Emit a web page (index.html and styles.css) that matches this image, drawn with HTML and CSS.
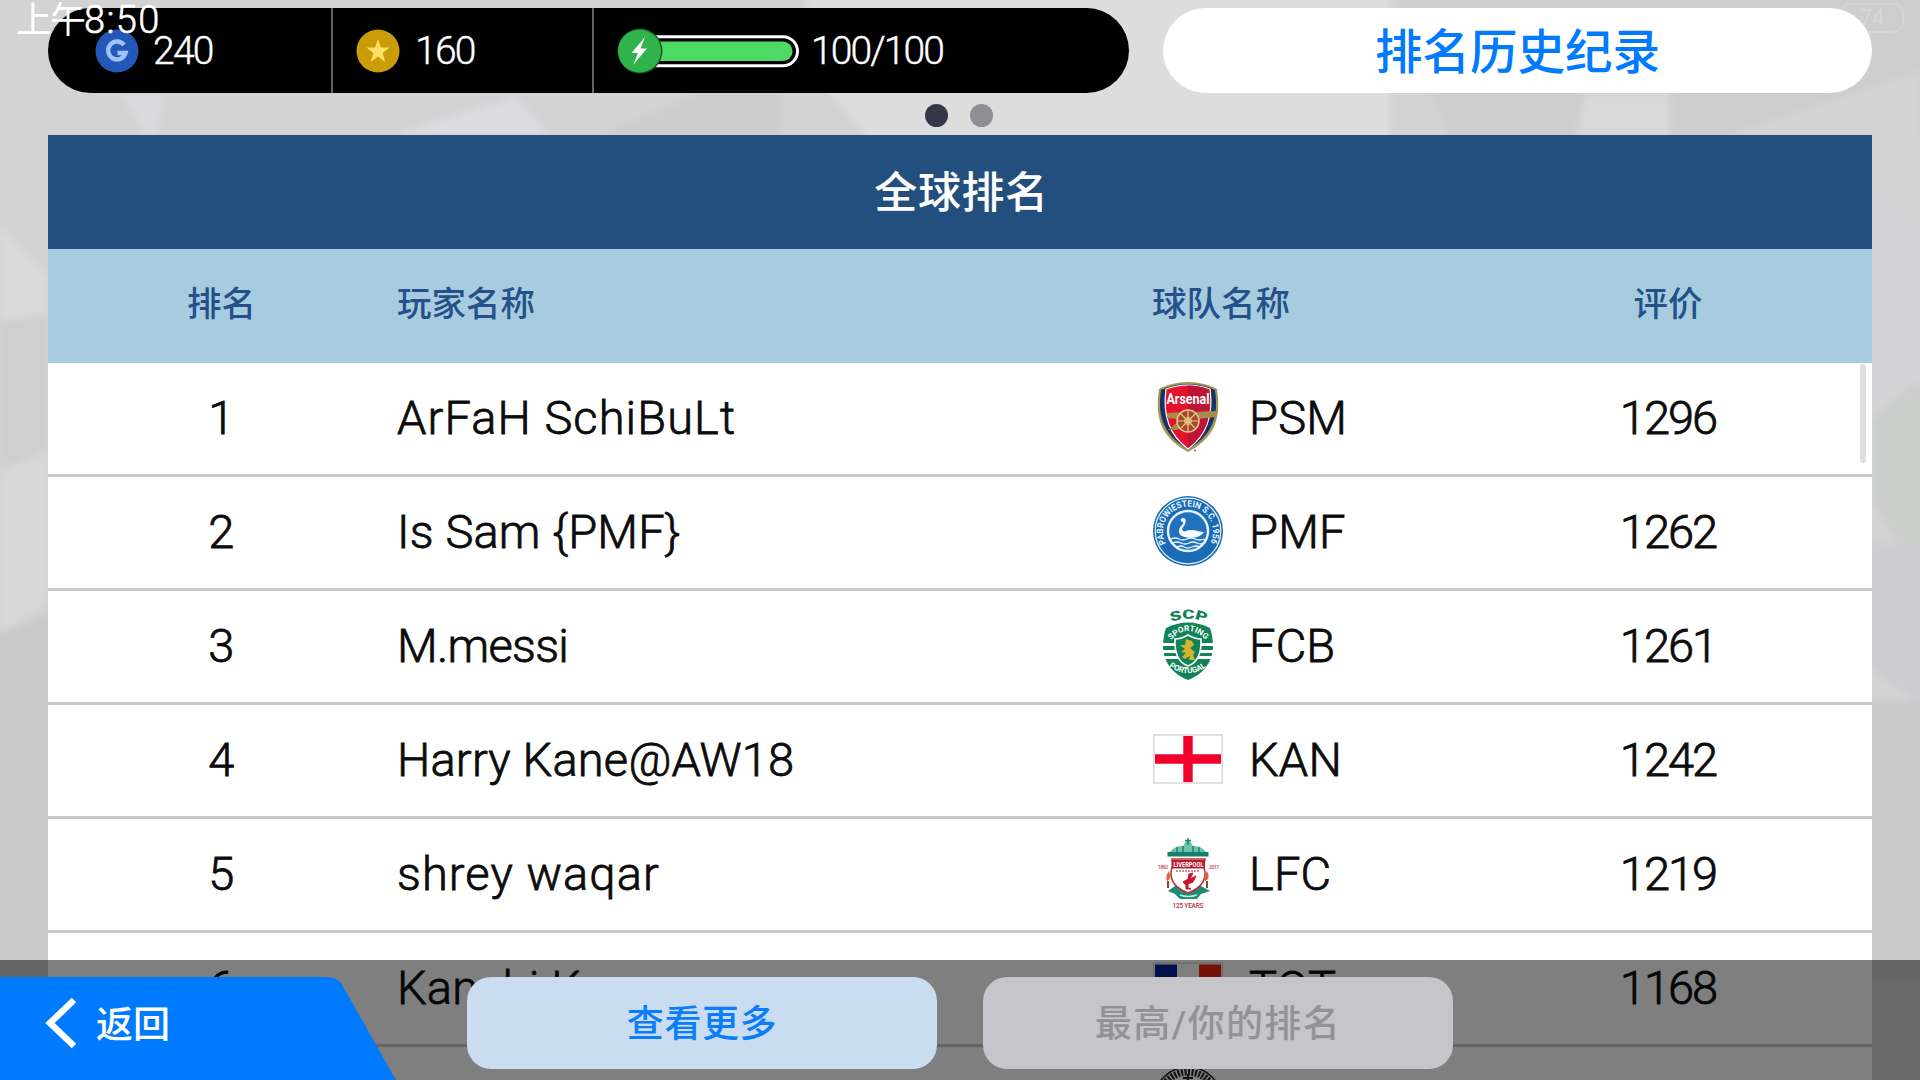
FILE: index.html
```
<!DOCTYPE html>
<html lang="zh-CN">
<head>
    <meta charset="UTF-8">
    <meta name="viewport" content="width=device-width, initial-scale=1.0">
    <title>全球排名</title>
    <link rel="stylesheet" href="styles.css">
</head>
<body>
    <!-- 背景 -->
    <svg class="backdrop" viewBox="0 0 1920 1080" preserveAspectRatio="none">
        <rect x="-20" y="-20" width="1960" height="1120" fill="#d3d3d4"/>
        <path d="M0 225L48 275V320L0 335Z" fill="#dadadb"/>
        <path d="M0 320L48 315V460L0 470Z" fill="#cfcfcf"/>
        <path d="M0 470L48 450V600L0 640Z" fill="#d7d7d7"/>
        <path d="M-20 640L60 610V790L-20 850Z" fill="#c9c9ca"/>
        <path d="M-20 850L60 790V1100H-20Z" fill="#cbcbcc"/>
        <path d="M120 93H165L158 135H145Z" fill="#dadadc"/>
        <path d="M390 135L515 97L550 135Z" fill="#dcdce0"/>
        <path d="M600 135L700 93H780V135Z" fill="#cdcdce"/>
        <path d="M800 -20H1390V140H870L830 93Z" fill="#dddddd"/>
        <path d="M1390 -20H1940V140H1450Z" fill="#cecece"/>
        <path d="M1585 93H1670V140H1575Z" fill="#d8d8d8"/>
        <path d="M1730 135L1920 70V200L1872 170Z" fill="#d3d3d3"/>
        <path d="M1872 350L1940 400V620L1872 500Z" fill="#cccecc"/>
        <path d="M1872 180L1940 240V360L1872 420Z" fill="#d3d2d5"/>
        <path d="M1860 540L1940 550V720L1860 660Z" fill="#cdccd0"/>
        <path d="M1860 700H1940V980H1860Z" fill="#cbcbcb"/>
    </svg>

    <!-- 系统状态栏 -->
    <div class="clock">上午<span>8:50</span></div>
    <div class="battery">74</div>

    <div class="screen">
        <header class="top-bar">
            <div class="wallet">
                <div class="wallet-item coins">
                    <svg class="wallet-icon" viewBox="0 0 44 44">
                        <circle cx="22" cy="22" r="21.5" fill="#2358b8"/>
                        <path d="M29 16A8.800 9 0 1 0 30.500 24H22.500" fill="none" stroke="#9cc3fb" stroke-width="4.4"/>
                    </svg>
                    <span>240</span>
                </div>
                <div class="wallet-item gold">
                    <svg class="wallet-icon" viewBox="0 0 44 44">
                        <circle cx="22" cy="22" r="21.5" fill="#c99c08"/>
                        <path d="M22 10L24.9 18.6H33.5L26.7 24L29.2 33L22 27.6L14.8 33L17.3 24L10.5 18.6H19.1Z" fill="#ffe066"/>
                    </svg>
                    <span>160</span>
                </div>
                <div class="wallet-item energy">
                    <svg class="energy-gauge" viewBox="0 0 184 44">
                        <rect x="24" y="7.8" width="156.500" height="29" rx="14.500" fill="#000" stroke="#fff" stroke-width="3"/>
                        <rect x="28" y="12.500" width="147.500" height="19.500" rx="9.700" fill="#4cd964"/>
                        <circle cx="23" cy="22" r="22.500" fill="#145c23"/>
                        <circle cx="22.500" cy="22" r="21.500" fill="#2fb34a"/>
                        <path d="M28 8L14.500 24H21L16 36L30 19.500H23.500Z" fill="#fff"/>
                    </svg>
                    <span>100/100</span>
                </div>
            </div>
            <button class="history">排名历史纪录</button>
        </header>

        <div class="pager">
            <span class="dot active"></span>
            <span class="dot"></span>
        </div>

        <main class="ranking">
            <h1>全球排名</h1>
            <div class="row head">
                <div class="rank">排名</div>
                <div class="name">玩家名称</div>
                <div class="team">球队名称</div>
                <div class="score">评价</div>
            </div>

            <div class="row">
                <div class="rank">1</div>
                <div class="name wide">ArFaH SchiBuLt</div>
                <div class="team">
                    <svg class="crest" viewBox="0 0 70 70">
                        <path d="M35 0C46 0 57 3 64 7C67 29 67 53 35 70C3 53 3 29 6 7C13 3 24 0 35 0Z" fill="#a69355"/>
                        <path d="M35 2C46 2 56 5 62 8C65 30 63 51 35 67.500C7 51 5 30 8 8C14 5 24 2 35 2Z" fill="#173264"/>
                        <path d="M35 3C44 3 51 5 57 7C60 29 57 51 35 67C13 51 10 29 13 7C19 5 26 3 35 3Z" fill="#e5122f" stroke="#fff" stroke-width="1.200"/>
                        <path d="M35 3.500C43 3.500 50 5 56 7.500C59 29 56 51 35 66Z" fill="#bf1535"/>
                        <text x="35" y="21.500" class="arsenal" text-anchor="middle" textLength="43" lengthAdjust="spacingAndGlyphs">Arsenal</text>
                        <path d="M14 31L64 29V35L44 37L24 48H15L25 40V37L14 36Z" fill="#a78b4d"/>
                        <circle cx="35" cy="39" r="11" fill="#a44930" stroke="#e9c583" stroke-width="1.500"/>
                        <circle cx="35" cy="39" r="3.500" fill="#a78b4d" stroke="#e9c583"/>
                        <path d="M35 28V50M24 39H46M27 31L43 47M43 31L27 47" stroke="#e9c583" stroke-width="1.200"/>
                        <circle cx="42" cy="68.500" r="1" fill="#c33"/>
                    </svg>
                    <span>PSM</span>
                </div>
                <div class="score">1296</div>
            </div>

            <div class="row">
                <div class="rank">2</div>
                <div class="name">Is Sam {PMF}</div>
                <div class="team">
                    <svg class="crest" viewBox="0 0 70 70">
                        <circle cx="35" cy="35" r="35" fill="#1a6bb5"/>
                        <circle cx="35" cy="35" r="32.800" fill="none" stroke="#e8f6ff" stroke-width="1.200"/>
                        <circle cx="35" cy="35" r="20" fill="#1f72bb" stroke="#e8f6ff" stroke-width="2.400"/>
                        <path id="ring" d="M13 47.500A25 25 0 1 1 57 47.500" fill="none"/>
                        <text class="ring-text"><textPath href="#ring" textLength="102" lengthAdjust="spacingAndGlyphs">PABROWIESTEIN S.C. 1956</textPath></text>
                        <path d="M30 26C27 26 27 22 30 22C34 22 33 27 31 30C28 33 29 36 33 35C39 32 46 36 51 36C47 42 41 42 34 41.500C27 41 23 36 28 30C30 28 31 26 30 26Z" fill="#f2faff"/>
                        <path d="M18 43q4-2 8 0t8 0t8 0t10 0M20 47q4-2 8 0t8 0t8 0t6 0M24 51q4-2 7 0t8 0t7 0" fill="none" stroke="#e8f6ff" stroke-width="1.300"/>
                    </svg>
                    <span>PMF</span>
                </div>
                <div class="score">1262</div>
            </div>

            <div class="row">
                <div class="rank">3</div>
                <div class="name tight">M.messi</div>
                <div class="team">
                    <svg class="crest" viewBox="0 0 70 70">
                        <path id="scp" d="M18 12Q35 5.500 52 12" fill="none"/>
                        <text class="scp-text"><textPath href="#scp" textLength="36" lengthAdjust="spacingAndGlyphs">SCP</textPath></text>
                        <path d="M13 18Q35 7 57 18Q60 27 60 38Q58 61 35 70Q12 61 10 38Q10 27 13 18Z" fill="#108458"/>
                        <path d="M9 34.500H61M9 41.500H61M10 47.500H60" stroke="#fff" stroke-width="3"/>
                        <path d="M35 25Q42 29 48 29Q49 51 35 56Q21 51 22 29Q28 29 35 25Z" fill="#108458" stroke="#fff" stroke-width="1.600"/>
                        <path d="M33 29L39 31L41 35L37 38L42 42L40 45L42 50H36L37 46L32 49L29 47L33 43L28 42L32 39L27 35L32 35Z" fill="#d8b42c"/>
                        <path id="sporting" d="M18 30Q35 12 53 30" fill="none"/>
                        <text class="shield-text"><textPath href="#sporting" textLength="40" lengthAdjust="spacingAndGlyphs">SPORTING</textPath></text>
                        <path id="portugal" d="M16 56.500Q35 70 54 56.500" fill="none"/>
                        <text class="shield-text"><textPath href="#portugal" textLength="40" lengthAdjust="spacingAndGlyphs">PORTUGAL</textPath></text>
                    </svg>
                    <span>FCB</span>
                </div>
                <div class="score">1261</div>
            </div>

            <div class="row">
                <div class="rank">4</div>
                <div class="name">Harry Kane@AW18</div>
                <div class="team">
                    <svg class="crest" viewBox="0 0 70 70">
                        <rect x=".8" y="11" width="68.400" height="48" fill="#fff" stroke="#dadada" stroke-width="1.600"/>
                        <path d="M2 35H68M35 12V58" stroke="#f2002b" stroke-width="9.400"/>
                    </svg>
                    <span>KAN</span>
                </div>
                <div class="score">1242</div>
            </div>

            <div class="row">
                <div class="rank">5</div>
                <div class="name wide">shrey waqar</div>
                <div class="team">
                    <svg class="crest" viewBox="0 0 70 70">
                        <path d="M16 15Q22 7 30 8L33 3H37L40 8Q48 7 54 15Z" fill="#6cc3ae"/>
                        <path d="M35 0V7M32 2.500H38M24 9V14M30 8V14M40 8V14M46 9V14" stroke="#26836d" stroke-width="1.500"/>
                        <rect x="14.500" y="14" width="41" height="4.500" fill="#16806a"/>
                        <path d="M15 53L22 48L48 48L57 53L48 56L44 61H27L22 56Z" fill="#1c8c75"/>
                        <path d="M19 21H52Q50 28 52 34Q53 48 35 55Q17 48 18 34Q20 28 19 21Z" fill="#fff" stroke="#bd2d3c" stroke-width="1.500"/>
                        <rect x="19" y="22" width="33" height="8.500" fill="#b71e30"/>
                        <text x="35.500" y="29" class="lfc-text" text-anchor="middle" textLength="30" lengthAdjust="spacingAndGlyphs">LIVERPOOL</text>
                        <path d="M23 33H47" stroke="#c96972" stroke-width="1.400" stroke-dasharray="2 1"/>
                        <path d="M36 36L40 35L37 41L43 38L40 44L35 46V50L38 51H33V47L30 44L35 41Z" fill="#c6192f" stroke="#c6192f"/>
                        <path d="M16 33Q12 38 14 43Q19 41 16 33ZM54 33Q50 38 52 43Q58 41 54 33Z" fill="#d56b3c"/>
                        <path d="M15 43V50M54 43V50" stroke="#96442f" stroke-width="2"/>
                        <path d="M27 57Q35 60 44 57" fill="none" stroke="#c2e9df" stroke-width="1.500"/>
                        <text x="5" y="31" class="year-text" textLength="10">1892</text>
                        <text x="56" y="31" class="year-text" textLength="10">2017</text>
                        <text x="35" y="69.500" class="years-text" text-anchor="middle" textLength="31">125 YEARS</text>
                    </svg>
                    <span>LFC</span>
                </div>
                <div class="score">1219</div>
            </div>

            <div class="row">
                <div class="rank">6</div>
                <div class="name">Kanchi K</div>
                <div class="team">
                    <svg class="crest" viewBox="0 0 70 70">
                        <rect x=".8" y="11" width="68.400" height="48" fill="#fff" stroke="#dadada" stroke-width="1.600"/>
                        <rect x="2" y="12.500" width="22" height="45" fill="#001f9c"/>
                        <rect x="46" y="12.500" width="22" height="45" fill="#f02010"/>
                    </svg>
                    <span>TOT</span>
                </div>
                <div class="score">1168</div>
            </div>

            <div class="row">
                <div class="rank"></div>
                <div class="name"></div>
                <div class="team">
                    <svg class="crest" viewBox="0 0 70 70">
                        <circle cx="35" cy="35" r="34" fill="#fff" stroke="#1b1f22" stroke-width="1.500"/>
                        <circle cx="35" cy="35" r="29" fill="none" stroke="#1b1f22" stroke-width="7" stroke-dasharray="2 1.500"/>
                        <path d="M35 8V20M30 12H40" stroke="#222" stroke-width="2"/>
                    </svg>
                </div>
                <div class="score"></div>
            </div>
            <div class="scrollbar"></div>
        </main>
    </div>

    <!-- 底部按钮 -->
    <footer class="bottom-bar">
        <button class="back">
            <svg class="back-shape" viewBox="0 0 396 103">
                <path d="M0 0H326Q336 0 341 6L396 103H0Z" fill="#007aff"/>
                <path d="M74 23L50 46L74 69" fill="none" stroke="#fff" stroke-width="6.500"/>
            </svg>
            <span>返回</span>
        </button>
        <button class="action">查看更多</button>
        <button class="action disabled">最高/你的排名</button>
    </footer>
</body>
</html>
```
FILE: styles.css
```
* {
    box-sizing: border-box;
}

body {
    margin: 0;
    width: 1920px;
    height: 1080px;
    position: relative;
    overflow: hidden;
    font-family: Roboto, "Noto Sans CJK SC", sans-serif;
    color: #0c0c0c;
    background-color: #d3d3d4;
}

button {
    border: none;
    padding: 0;
    font-family: inherit;
    cursor: pointer;
}

.backdrop {
    position: absolute;
    top: 0;
    left: 0;
    width: 1920px;
    height: 1080px;
    overflow: visible;
    filter: blur(3px);
}

/* 状态栏浮在内容上面 */
.clock {
    position: absolute;
    top: 0;
    left: 16px;
    z-index: 3;
    color: #fff;
    font-size: 36px;
    line-height: 40px;
    letter-spacing: -2px;
}

.clock span {
    font-size: 38px;
    font-weight: 300;
    letter-spacing: 1.4px;
    -webkit-text-stroke: 0.6px #fff;
}

.battery {
    position: absolute;
    top: 3px;
    left: 1840px;
    width: 64px;
    height: 30px;
    border: 2px solid rgba(255, 255, 255, 0.14);
    border-radius: 10px;
    color: rgba(255, 255, 255, 0.2);
    font-size: 22px;
    line-height: 26px;
    text-align: center;
}

.screen {
    position: relative;
    width: 1824px;
    height: 1080px;
    margin: 0 auto;
    padding-top: 8px;
    overflow: hidden;
}

.top-bar {
    display: flex;
    justify-content: space-between;
    height: 85px;
}

.wallet {
    display: flex;
    width: 1081px;
    background-color: #000;
    border-radius: 43px;
    overflow: hidden;
}

.wallet-item {
    display: flex;
    align-items: center;
    color: #fff;
    font-size: 39px;
    font-weight: 300;
    letter-spacing: -1.7px;
    -webkit-text-stroke: 0.4px #fff;
}

.wallet-icon {
    width: 44px;
    height: 44px;
}

.coins {
    width: 285px;
    padding-left: 47px;
    gap: 14px;
    border-right: 2px solid #626262;
}

.gold {
    width: 261px;
    padding-left: 23px;
    gap: 15px;
    border-right: 2px solid #626262;
}

.energy {
    padding-left: 23px;
    gap: 10px;
    letter-spacing: -1.9px;
}

.energy-gauge {
    width: 184px;
    height: 44px;
    overflow: visible;
}

.history {
    width: 709px;
    padding-bottom: 5px;
    background-color: #fff;
    border-radius: 43px;
    color: #007aff;
    font-size: 47.5px;
    font-weight: 500;
}

.pager {
    display: flex;
    justify-content: center;
    align-items: center;
    gap: 22px;
    height: 42px;
    padding-top: 2px;
    padding-right: 2px;
}

.dot {
    width: 23px;
    height: 23px;
    border-radius: 50%;
    background-color: #8f8e94;
}

.dot.active {
    background-color: #353749;
}

.ranking {
    position: relative;
}

h1 {
    margin: 0;
    height: 114px;
    padding-left: 3px;
    background-color: #224f7d;
    color: #fff;
    font-size: 43px;
    font-weight: 500;
    line-height: 116px;
    letter-spacing: 0.6px;
    text-align: center;
}

.row {
    display: grid;
    grid-template-columns: 346px 758px 312px 408px;
    align-items: center;
    height: 114px;
    padding-bottom: 3px;
    background-color: #fff;
    border-bottom: 3px solid #c9c9c9;
    font-size: 47px;
    font-weight: 300;
    letter-spacing: 0.2px;
    -webkit-text-stroke: 0.8px #0c0c0c;
}

.head {
    background-color: #a8ccdf;
    border-bottom: none;
    padding-bottom: 11px;
    color: #26508a;
    font-size: 34.5px;
    font-weight: 500;
    letter-spacing: 0;
    -webkit-text-stroke: 0;
}

.rank,
.score {
    text-align: center;
}

.rank {
    padding-left: 1px;
}

.score {
    letter-spacing: -2px;
}

.name {
    padding-left: 3px;
}

.name.wide {
    letter-spacing: 1.1px;
}

.name.tight {
    letter-spacing: -0.7px;
}

.team {
    display: flex;
    align-items: center;
    gap: 26px;
}

.head .score {
    letter-spacing: 0;
}

.crest {
    width: 70px;
    height: 70px;
    margin-left: 1px;
    overflow: visible;
    font-weight: 500;
    letter-spacing: 0;
    -webkit-text-stroke: 0;
}

.arsenal {
    font-size: 15px;
    font-weight: 700;
    fill: #fff;
}

.ring-text {
    font-size: 9px;
    font-weight: 700;
    fill: #e8f6ff;
}

.scp-text {
    font-size: 13px;
    font-weight: 900;
    fill: #108458;
}

.shield-text {
    font-size: 8px;
    font-weight: 700;
    fill: #fff;
}

.lfc-text {
    font-size: 8px;
    font-weight: 700;
    fill: #fff;
}

.year-text {
    font-size: 5px;
    fill: #c0454f;
}

.years-text {
    font-size: 6.5px;
    fill: #b5303e;
}

.scrollbar {
    position: absolute;
    top: 229px;
    right: 6px;
    width: 6px;
    height: 99px;
    border-radius: 3px;
    background-color: #e1dfdf;
}

.bottom-bar {
    position: absolute;
    left: 0;
    bottom: 0;
    width: 1920px;
    height: 120px;
    padding-top: 17px;
    display: flex;
    background-color: rgba(0, 0, 0, 0.5);
}

.back {
    position: relative;
    width: 467px;
    height: 103px;
    padding-left: 96px;
    padding-bottom: 14px;
    background: none;
    color: #fff;
    font-size: 37px;
    font-weight: 500;
    text-align: left;
}

.back-shape {
    position: absolute;
    left: 0;
    top: 0;
    width: 396px;
    height: 103px;
}

.back span {
    position: relative;
}

.action {
    width: 470px;
    height: 92px;
    margin-right: 46px;
    padding-bottom: 4px;
    border-radius: 24px;
    background-color: #c9dcf0;
    color: #0a7dfa;
    font-size: 37px;
    font-weight: 500;
    letter-spacing: 0.6px;
}

.action.disabled {
    background-color: #c5c5ca;
    color: #929297;
    letter-spacing: 1.4px;
}
```
